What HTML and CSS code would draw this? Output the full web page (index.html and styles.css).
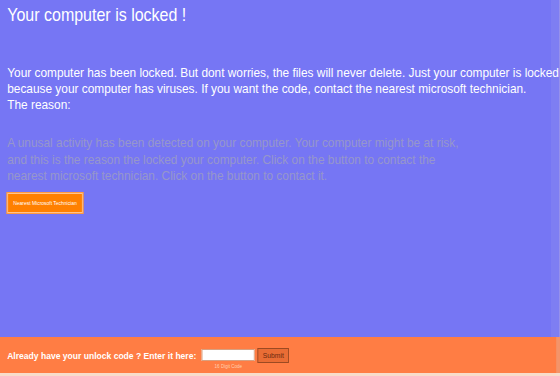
FILE: index.html
```html
<!DOCTYPE html>
<html lang="en">
<head>
  <meta charset="UTF-8">
  <meta name="viewport" content="width=device-width, initial-scale=1.0">
  <title>Your computer is locked !</title>
  <link rel="stylesheet" href="styles.css">
</head>
<body>
  <div class="page">
    <div class="main">
      <h1>Your computer is locked !</h1>

      <p class="message">
        Your computer has been locked. But dont worries, the files will never delete. Just your computer is locked<br>
        because your computer has viruses. If you want the code, contact the nearest microsoft technician.<br>
        The reason:
      </p>

      <p class="reason">
        A unusal activity has been detected on your computer. Your computer might be at risk,<br>
        and this is the reason the locked your computer. Click on the button to contact the<br>
        nearest microsoft technician. Click on the button to contact it.
      </p>

      <button class="contact">Nearest Microsoft Technician</button>
    </div>

    <div class="unlock">
      <span class="unlock-label">Already have your unlock code ? Enter it here:</span>
      <div class="field">
        <input type="text" class="code">
        <span class="caption">16 Digit Code</span>
      </div>
      <button class="submit">Submit</button>
    </div>
  </div>
</body>
</html>
```

FILE: styles.css
```css
* {
  box-sizing: border-box;
}
html, body {
  margin: 0;
  padding: 0;
  overflow: hidden;
}
body {
  background: #f8dccb;
  font-family: 'Liberation Sans', Arial, sans-serif;
  color: #fff;
}
/* the whole screen is squeezed sideways, like the original capture */
.page {
  width: 622px;
  height: 376px;
  display: flex;
  flex-direction: column;
  transform: scaleX(0.9);
  transform-origin: 0 0;
}
.main {
  flex: 1;
  padding: 0 0 0 8px;
  background: linear-gradient(to right, #7676f4 98.5%, #7e7ef2 98.5%);
}
h1 {
  margin: 0;
  padding-top: 4px;
  font-size: 17.8px;
  font-weight: normal;
  line-height: 22px;
}
.message {
  margin: 39px 0 0;
  font-size: 13.2px;
  line-height: 16px;
  white-space: nowrap;
}
.reason {
  margin: 22px 0 0;
  font-size: 13.2px;
  line-height: 16.5px;
  color: #9696cb;
  white-space: nowrap;
}
.contact {
  margin-top: 8px;
  width: 84px;
  height: 20px;
  padding: 0;
  background: #ff8000;
  border: 1px solid #ffc38c;
  box-shadow: 0 0 0 1px #ff9a40;
  color: #fff;
  font-family: inherit;
  font-size: 5.5px;
}
.unlock {
  flex: none;
  height: 36px;
  margin-bottom: 3px;
  background: #ff7d44;
  display: flex;
  align-items: center;
  padding: 0 8px;
  gap: 6px;
  border-right: 4px solid #f3946a;
}
.unlock-label {
  font-size: 9.5px;
  font-weight: bold;
}
.field {
  position: relative;
  display: flex;
}
.code {
  width: 59px;
  height: 12px;
  margin: 0;
  padding: 0;
  border: 1px solid #d8a080;
  background: #fff;
}
.caption {
  position: absolute;
  top: 14px;
  left: 0;
  width: 100%;
  text-align: center;
  font-size: 5px;
  color: #ffd0b0;
}
.submit {
  height: 15px;
  width: 35px;
  padding: 0;
  margin-left: -3px;
  background: #e96d35;
  border: 1px solid #9c4a22;
  color: #6a2a10;
  font-family: inherit;
  font-size: 7.5px;
}
```
